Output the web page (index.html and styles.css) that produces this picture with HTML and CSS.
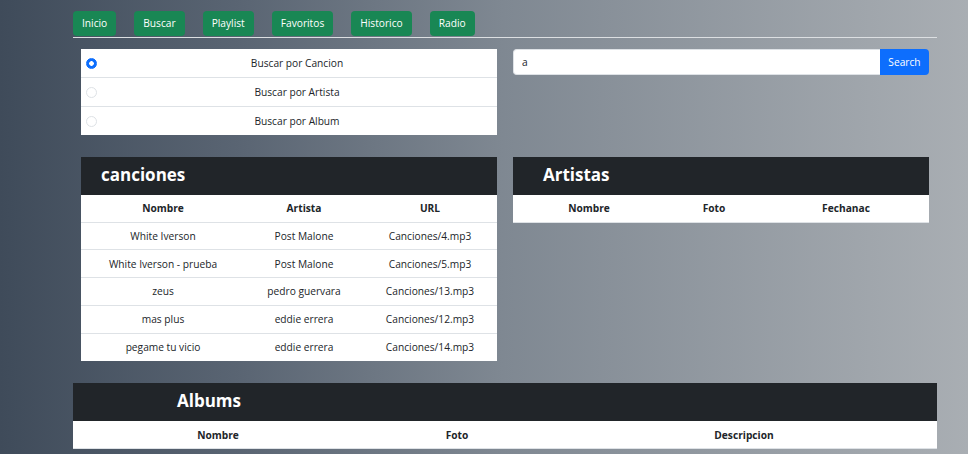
FILE: index.html
```html
<!DOCTYPE html>
<html lang="es">
<head>
<meta charset="utf-8">
<title>Buscar</title>
<link rel="stylesheet" href="styles.css">
</head>
<body>
<div class="page">
  <nav class="nav">
    <a class="nav-btn">Inicio</a>
    <a class="nav-btn">Buscar</a>
    <a class="nav-btn">Playlist</a>
    <a class="nav-btn">Favoritos</a>
    <a class="nav-btn">Historico</a>
    <a class="nav-btn">Radio</a>
  </nav>
  <div class="rule"></div>

  <div class="row row-search">
    <div class="col">
      <ul class="list-group">
        <li class="list-item"><input type="radio" name="tipo" class="radio" checked><span class="list-label">Buscar por Cancion</span></li>
        <li class="list-item"><input type="radio" name="tipo" class="radio"><span class="list-label">Buscar por Artista</span></li>
        <li class="list-item"><input type="radio" name="tipo" class="radio"><span class="list-label">Buscar por Album</span></li>
      </ul>
    </div>
    <div class="col">
      <div class="input-group">
        <input class="search-input" type="text" value="a">
        <button class="search-btn">Search</button>
      </div>
    </div>
  </div>

  <div class="row row-tables">
    <div class="col">
      <div class="card">
        <div class="card-head head-canciones">canciones</div>
        <table class="table">
          <colgroup><col class="c-164"><col class="c-118"><col></colgroup>
          <thead><tr><th>Nombre</th><th>Artista</th><th>URL</th></tr></thead>
          <tbody>
            <tr><td>White Iverson</td><td>Post Malone</td><td>Canciones/4.mp3</td></tr>
            <tr><td>White Iverson - prueba</td><td>Post Malone</td><td>Canciones/5.mp3</td></tr>
            <tr><td>zeus</td><td>pedro guervara</td><td>Canciones/13.mp3</td></tr>
            <tr><td>mas plus</td><td>eddie errera</td><td>Canciones/12.mp3</td></tr>
            <tr><td>pegame tu vicio</td><td>eddie errera</td><td>Canciones/14.mp3</td></tr>
          </tbody>
        </table>
      </div>
    </div>
    <div class="col">
      <div class="card">
        <div class="card-head head-artistas">Artistas</div>
        <table class="table">
          <colgroup><col class="c-152"><col class="c-98"><col></colgroup>
          <thead><tr><th>Nombre</th><th>Foto</th><th>Fechanac</th></tr></thead>
        </table>
      </div>
    </div>
  </div>

  <div class="card card-albums">
    <div class="card-head head-albums">Albums</div>
    <table class="table table-albums">
      <colgroup><col class="c-290"><col class="c-188"><col></colgroup>
      <thead><tr><th>Nombre</th><th>Foto</th><th>Descripcion</th></tr></thead>
    </table>
  </div>
</div>
</body>
</html>
```

FILE: styles.css
```css
* { box-sizing: border-box; }

html, body {
  margin: 0;
  padding: 0;
}

body {
  min-height: 454px;
  background: linear-gradient(90deg, #3f4b5a 0%, #5a6573 25%, #7f8892 52%, #a9aeb3 100%);
  font-family: "Open Sans", "Noto Sans", sans-serif;
  font-size: 10.2px;
  color: #212529;
  overflow: hidden;
}

.page {
  margin: 0 31px 0 73px;
  padding-top: 11px;
}

.nav {
  display: flex;
  gap: 18px;
}

.nav-btn {
  display: block;
  height: 25px;
  line-height: 25px;
  padding: 0 9px;
  background: #198754;
  color: #fff;
  border-radius: 4px;
  font-size: 10.2px;
}

.rule {
  margin-top: 1px;
  height: 1px;
  background: #dcdfe2;
}

.row {
  display: grid;
  grid-template-columns: 1fr 1fr;
}

.col {
  padding: 0 8px;
}

.row-search {
  margin-top: 11px;
}

.list-group {
  list-style: none;
  margin: 0;
  padding: 0;
  background: #fff;
}

.list-item {
  display: flex;
  align-items: center;
  height: 29px;
  padding-left: 5px;
  border-bottom: 1px solid #dee2e6;
}

.list-item:last-child {
  border-bottom: 0;
  height: 28px;
}

.radio {
  appearance: none;
  -webkit-appearance: none;
  margin: 0;
  width: 11px;
  height: 11px;
  border: 1px solid #dee2e6;
  border-radius: 50%;
  background: #fff;
  flex: none;
}

.radio:checked {
  border-color: #0d6efd;
  background: radial-gradient(circle, #fff 0, #fff 2px, #0d6efd 2.6px);
}

.list-label {
  flex: 1;
  text-align: center;
}

.input-group {
  display: flex;
  height: 26px;
}

.search-input {
  flex: 1;
  min-width: 0;
  height: 26px;
  border: 1px solid #dee2e6;
  border-right: 0;
  border-radius: 4px 0 0 4px;
  padding: 0 8px;
  font-family: inherit;
  font-size: 10.2px;
  color: #212529;
  background: #fff;
  outline: none;
}

.search-btn {
  width: 49px;
  height: 26px;
  border: 0;
  border-radius: 0 4px 4px 0;
  background: #0d6efd;
  color: #fff;
  font-family: inherit;
  font-size: 10.2px;
  padding: 0;
}

.row-tables {
  margin-top: 22px;
}

.card-head {
  height: 38px;
  line-height: 36px;
  background: #212529;
  color: #fff;
  font-size: 17px;
  font-weight: 700;
}

.head-canciones { padding-left: 20px; }
.head-artistas { padding-left: 30px; }
.head-albums { padding-left: 104px; }

.table {
  width: 100%;
  border-collapse: collapse;
  table-layout: fixed;
  background: #fff;
}

.table th,
.table td {
  padding: 0;
  height: 27.8px;
  text-align: center;
  border-bottom: 1px solid #dee2e6;
  font-weight: 400;
  white-space: nowrap;
}

.table th {
  font-weight: 700;
  height: 27px;
}

.table-albums th {
  height: 28px;
}

.table tbody tr:last-child td {
  border-bottom: 0;
}

.c-164 { width: 164px; }
.c-118 { width: 118px; }
.c-152 { width: 152px; }
.c-98 { width: 98px; }
.c-290 { width: 290px; }
.c-188 { width: 188px; }

.card-albums {
  margin-top: 22px;
}
```
